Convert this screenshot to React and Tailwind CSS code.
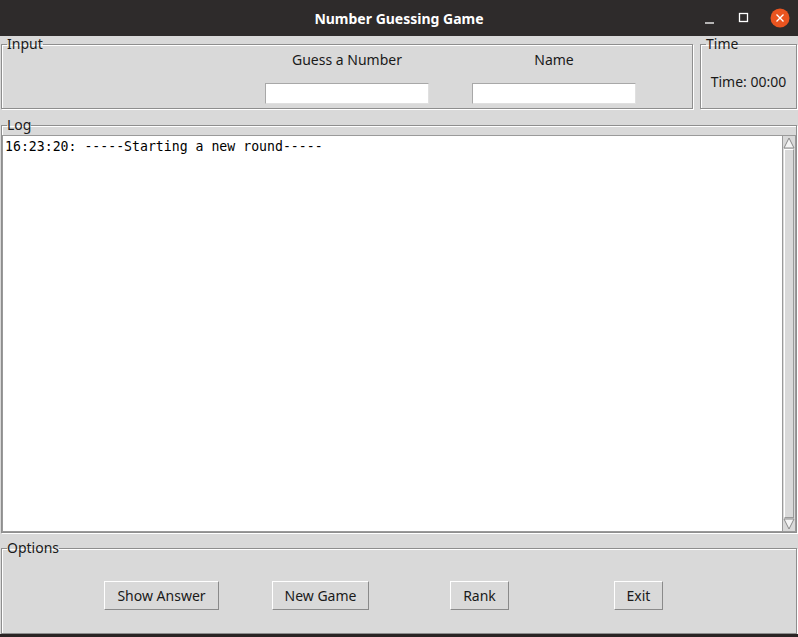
import React from 'react';

const groove = 'border border-[#8e8e8e] shadow-[inset_1px_1px_0_#ffffff,1px_1px_0_#ffffff]';
const raised = 'border border-t-white border-l-white border-r-[#8a8a8a] border-b-[#8a8a8a]';

function Frame({ label, className = '', children }) {
  return (
    <fieldset className={`${groove} min-w-0 ${className}`}>
      <legend className="ml-[5px] px-0 leading-[16px] text-[14px] text-[#1a1a1a]">{label}</legend>
      {children}
    </fieldset>
  );
}

function TitleBar() {
  return (
    <div className="h-[36px] bg-[#2e2b2b] flex items-center relative">
      <div className="flex-1 text-center text-white font-bold text-[14px]">Number Guessing Game</div>
      <div className="absolute right-[8px] top-0 h-[36px] flex items-center gap-[18px]">
        <svg width="16" height="16" viewBox="0 0 16 16">
          <path d="M3 13h9" stroke="#ffffff" strokeWidth="1.3" />
        </svg>
        <svg width="16" height="16" viewBox="0 0 16 16">
          <rect x="3.5" y="3.5" width="8" height="8" fill="none" stroke="#ffffff" strokeWidth="1.3" />
        </svg>
        <svg width="20" height="20" viewBox="0 0 20 20">
          <circle cx="10" cy="10" r="9.5" fill="#e95420" />
          <path d="M6.5 6.5l7 7M13.5 6.5l-7 7" stroke="#ffffff" strokeWidth="1.4" />
        </svg>
      </div>
    </div>
  );
}

function Button({ children }) {
  return (
    <button className={`${raised} h-[29px] px-[12px] bg-[#d9d9d9] text-[14px] text-[#1a1a1a]`}>{children}</button>
  );
}

export default function App() {
  return (
    <div className="w-[798px] h-[637px] bg-[#d9d9d9] flex flex-col font-['Noto_Sans','DejaVu_Sans',sans-serif] overflow-hidden">
      <TitleBar />

      <div className="flex pl-[1px] gap-[7px] h-[76px]">
        <Frame label="Input" className="w-[692px] h-[73px]">
          <div className="grid grid-cols-[164px_164px] gap-x-[43px] ml-[263px] text-[14px] text-[#1a1a1a]">
            <div className="text-center leading-[16px]">Guess a Number</div>
            <div className="text-center leading-[16px]">Name</div>
            <input className="mt-[15px] h-[21px] bg-white border border-[#a8a8a8] border-b-[#e0e0e0] border-r-[#e0e0e0] outline-none" />
            <input className="mt-[15px] h-[21px] bg-white border border-[#a8a8a8] border-b-[#e0e0e0] border-r-[#e0e0e0] outline-none" />
          </div>
        </Frame>
        <Frame label="Time" className="w-[97px] h-[73px]">
          <div className="text-center text-[14px] text-[#1a1a1a] mt-[21px] leading-[18px]">Time: 00:00</div>
        </Frame>
      </div>

      <div className="px-[1px] mt-[5px]">
        <Frame label="Log" className="h-[416px]">
          <div className="flex h-[397px] mt-[2px]">
            <div className="flex-1 bg-white border border-[#9a9a9a] border-r-0 pl-[2px] pt-[2px] font-['DejaVu_Sans_Mono',monospace] text-[13.2px] leading-[17px] text-black">
              16:23:20: -----Starting a new round-----
            </div>
            <div className="w-[14px] bg-[#d9d9d9] border border-[#9a9a9a] flex flex-col">
              <svg width="12" height="13" viewBox="0 0 12 13" className="shrink-0">
                <path d="M6 2L11 12H1Z" fill="#f4f4f4" stroke="#8a8a8a" />
              </svg>
              <div className="flex-1 mx-[1px] border border-t-white border-l-white border-r-[#9a9a9a] border-b-[#9a9a9a]" />
              <svg width="12" height="13" viewBox="0 0 12 13" className="shrink-0">
                <path d="M6 11L11 1H1Z" fill="#f4f4f4" stroke="#8a8a8a" />
              </svg>
            </div>
          </div>
        </Frame>
      </div>

      <div className="px-[1px] mt-[7px]">
        <Frame label="Options" className="h-[94px]">
          <div className="grid grid-cols-[repeat(4,159px)] ml-[80px] mt-[25px] justify-items-center">
            <Button>Show Answer</Button>
            <Button>New Game</Button>
            <Button>Rank</Button>
            <Button>Exit</Button>
          </div>
        </Frame>
      </div>

      <div className="flex-1 bg-[#2a2424]" />
    </div>
  );
}
